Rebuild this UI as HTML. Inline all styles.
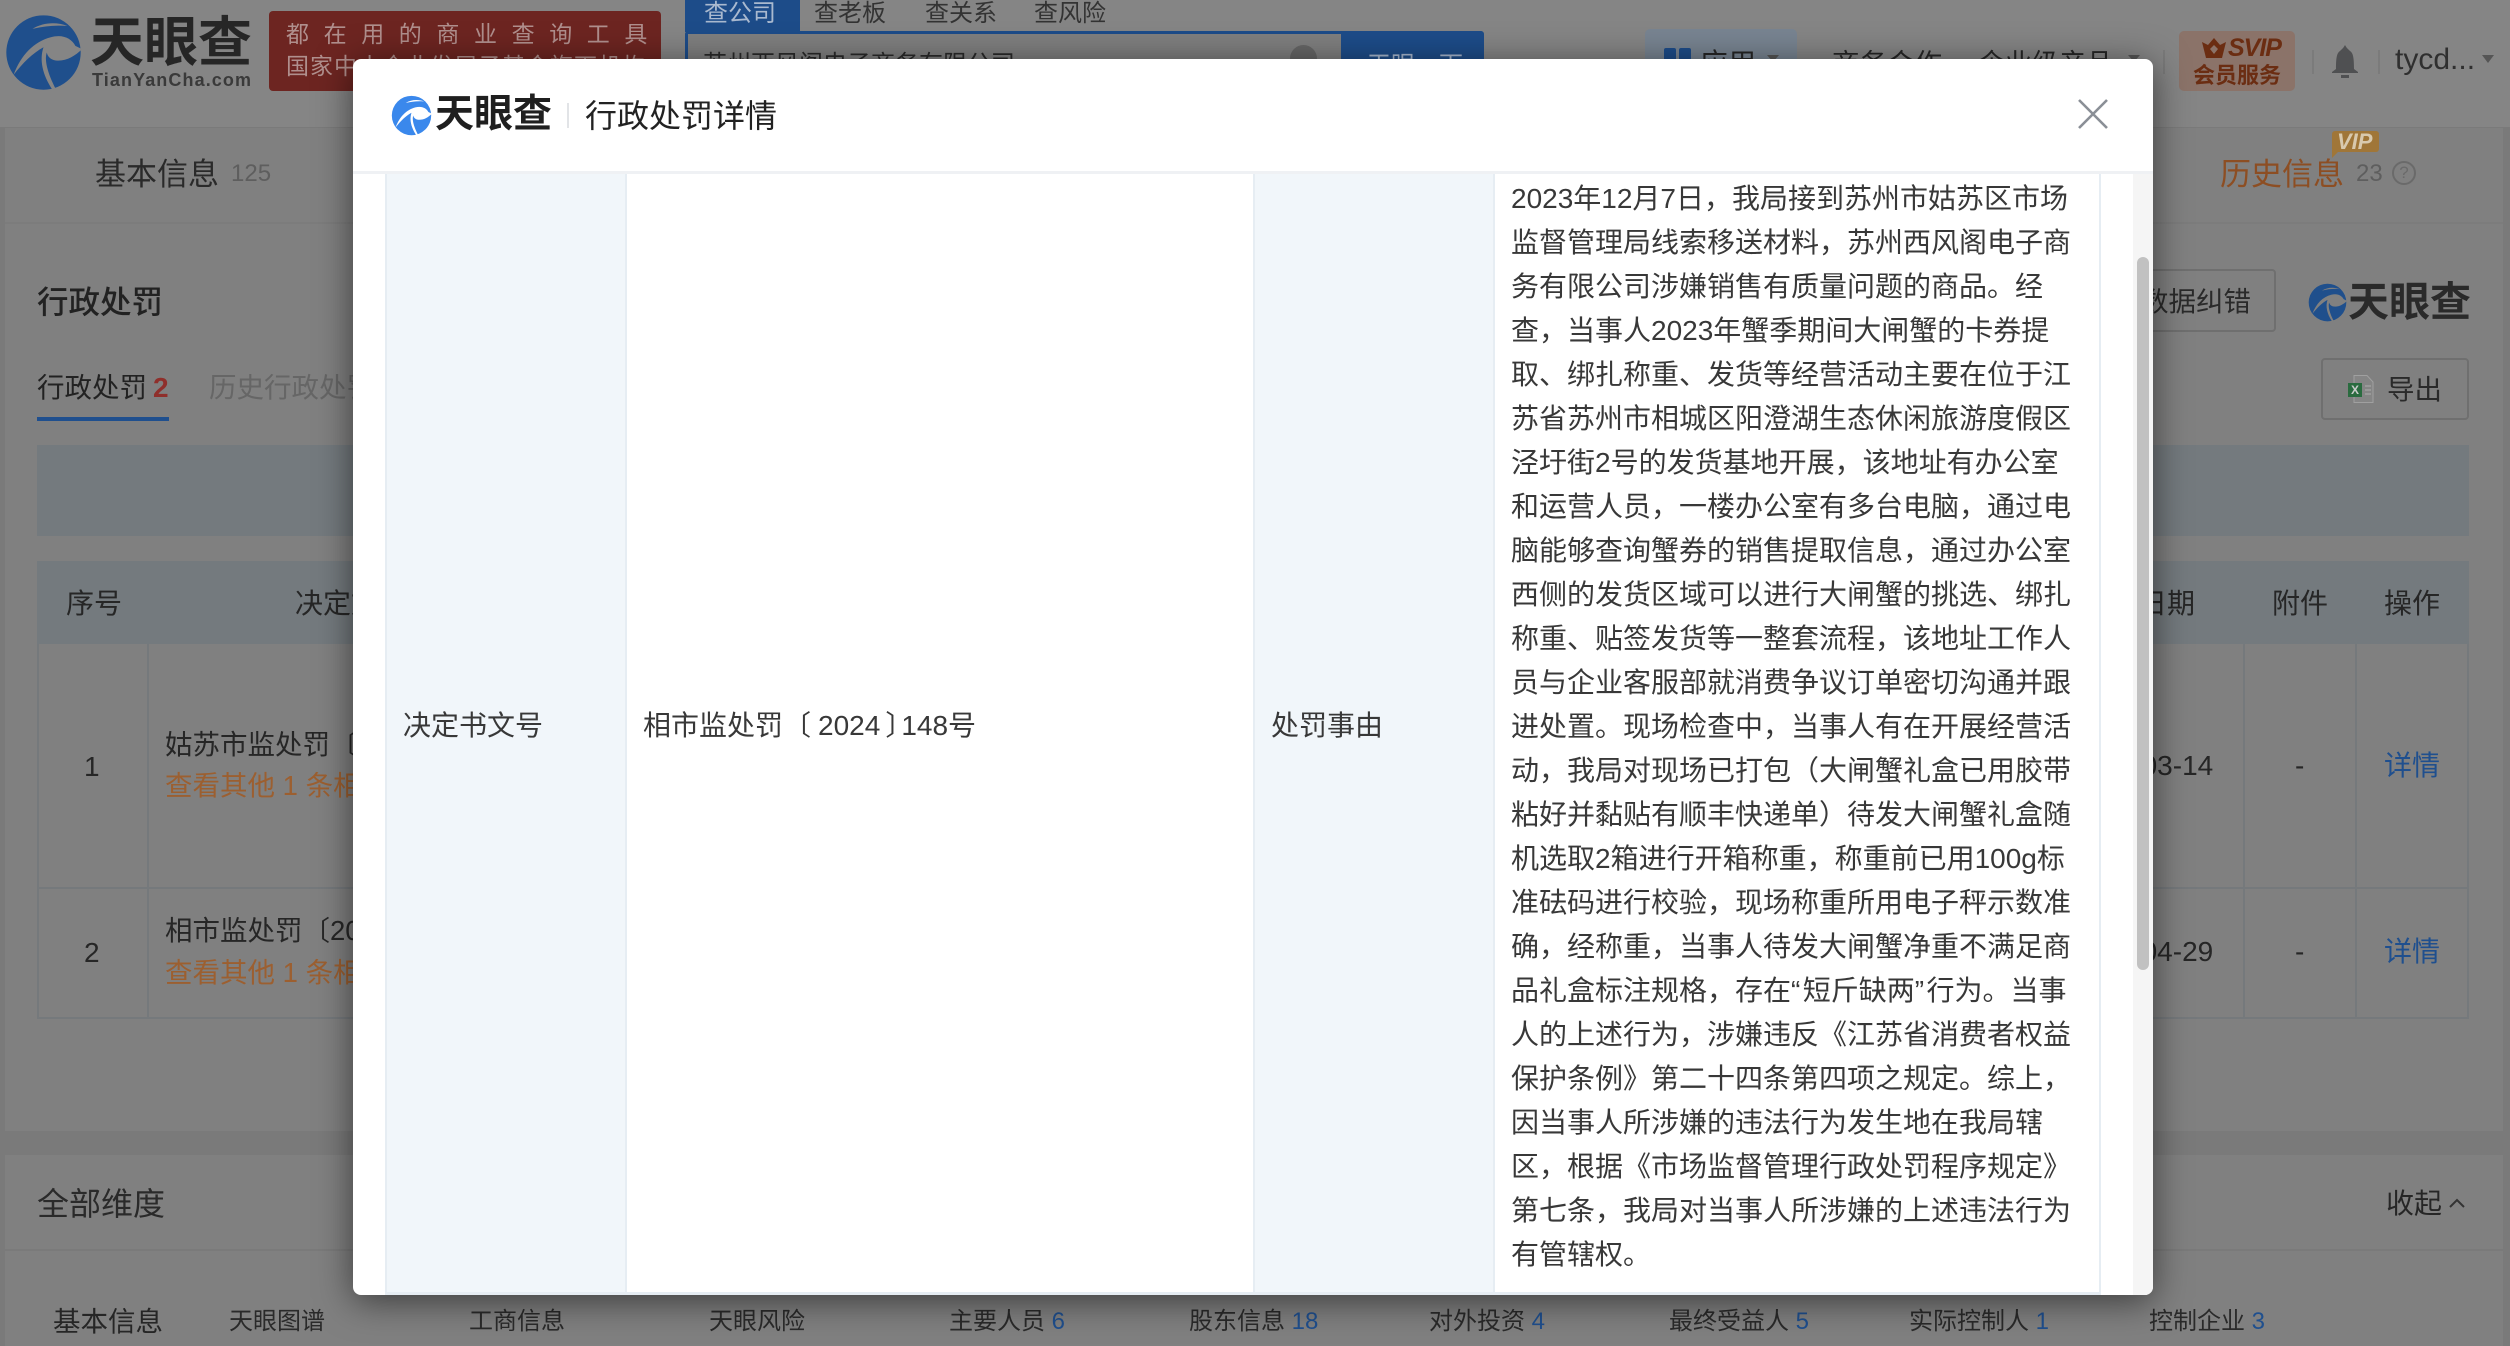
<!DOCTYPE html>
<html lang="zh-CN"><head><meta charset="utf-8"><title>行政处罚详情</title>
<style>
*{box-sizing:border-box}
html,body{margin:0;padding:0;width:2510px;height:1346px;overflow:hidden;background:#7a7a7a;font-family:"Liberation Sans","Noto Sans CJK SC",sans-serif}
.a{position:absolute}
.t{position:absolute;white-space:nowrap;line-height:40px;height:40px;font-size:28px;color:#262626}
.b{color:#1f4f8e}
.s{font-size:24px;color:#2a2a2a}
.l{position:absolute;left:1511px;height:44px;line-height:44px;font-size:28px;color:#383838;white-space:nowrap;margin-top:1px}
</style></head><body>
<svg width="0" height="0" style="position:absolute"><defs>
<symbol id="lg" viewBox="0 0 256 256"><circle cx="128" cy="128" r="112" fill="var(--c)"/>
<path fill="currentColor" d="M95 57C125 38 165 35 200 48C165 45 130 48 95 57Z"/>
<path fill="currentColor" d="M38 195C60 135 100 95 150 82C185 72 212 85 224 108L244 118C222 140 195 155 165 152C150 150 140 140 138 128C130 150 140 190 165 238L155 240C125 195 115 150 128 112C95 130 65 160 38 195Z"/>
</symbol></defs></svg>

<!-- header -->
<div class="a" style="left:0;top:0;width:2510px;height:127px;background:#858585"></div>
<svg class="a" style="left:1px;top:10px;width:85px;height:85px;--c:#1f4f8c;color:#858585"><use href="#lg"/></svg>
<div class="t" style="left:90px;top:12px;font-size:54px;height:62px;line-height:62px;font-weight:700;color:#262626;letter-spacing:0">天眼查</div>
<div class="t" style="left:92px;top:60px;font-size:18px;font-weight:700;color:#3a3a3a;letter-spacing:1.1px">TianYanCha.com</div>
<div class="a" style="left:269px;top:11px;width:392px;height:80px;background:#6d2521;border-radius:4px"></div>
<div class="t" style="left:286px;top:14px;font-size:23px;color:#b08f8d;letter-spacing:14.6px">都在用的商业查询工具</div>
<div class="t" style="left:286px;top:46px;font-size:23px;color:#b08f8d;letter-spacing:1px">国家中小企业发展子基金旗下机构</div>
<div class="a" style="left:685px;top:0;width:115px;height:32px;background:#1d4c89"></div>
<div class="t" style="left:704px;top:-6px;font-size:24px;color:#a9b9cf">查公司</div>
<div class="t" style="left:814px;top:-6px;font-size:24px;color:#333">查老板</div>
<div class="t" style="left:925px;top:-6px;font-size:24px;color:#333">查关系</div>
<div class="t" style="left:1034px;top:-6px;font-size:24px;color:#333">查风险</div>
<div class="a" style="left:685px;top:31px;width:799px;height:60px;border:3px solid #1d4c89;border-radius:3px;background:#7f7f7f"></div>
<div class="t" style="left:703px;top:45px;font-size:24px;color:#2a2a2a">苏州西风阁电子商务有限公司</div>
<div class="a" style="left:1290px;top:45px;width:27px;height:27px;border-radius:50%;background:#666"></div>
<div class="a" style="left:1341px;top:31px;width:143px;height:60px;background:#1d4c89;border-radius:0 4px 4px 0"></div>
<div class="t" style="left:1367px;top:46px;font-size:24px;color:#a9b9cf">天眼一下</div>
<div class="a" style="left:1645px;top:29px;width:152px;height:50px;background:#788491;border-radius:5px 5px 0 0"></div>
<div class="a" style="left:1664px;top:48px;width:12px;height:20px;background:#1d4c89;border-radius:2px"></div>
<div class="a" style="left:1679px;top:48px;width:12px;height:20px;background:#1d4c89;border-radius:2px"></div>
<div class="t" style="left:1700px;top:44px;font-size:28px">应用</div>
<div class="a" style="left:1767px;top:55px;width:0;height:0;border:6px solid transparent;border-top:7px solid #555"></div>
<div class="t" style="left:1832px;top:44px;font-size:27.500px">商务合作</div>
<div class="t" style="left:1978px;top:44px;font-size:27px">企业级产品</div>
<div class="a" style="left:2128px;top:55px;width:0;height:0;border:6px solid transparent;border-top:7px solid #555"></div>
<div class="a" style="left:2163px;top:50px;width:2px;height:24px;background:#7b7b7b"></div>
<div class="a" style="left:2179px;top:31px;width:116px;height:60px;background:#8b7369;border-radius:5px"></div>
<svg class="a" style="left:2202px;top:38px" width="24" height="20" viewBox="0 0 24 20"><path fill="#6b2d12" d="M0 4L6 7L12 0L18 7L24 4L20 20H4Z"/><path fill="#8b7369" d="M12 7L16 11L12 16L8 11Z"/></svg>
<div class="t" style="left:2228px;top:28px;font-size:25px;font-weight:700;font-style:italic;color:#6b2d12;letter-spacing:-1px">SVIP</div>
<div class="t" style="left:2193px;top:56px;font-size:22px;font-weight:700;color:#6b2d12">会员服务</div>
<div class="a" style="left:2312px;top:50px;width:2px;height:24px;background:#7b7b7b"></div>
<svg class="a" style="left:2331px;top:45px" width="28" height="33" viewBox="0 0 28 33"><path fill="#4f5052" d="M14 0C15.500 3 17 4 19 6C22 8 23 12 23 24L27 27V28H1V27L5 24C5 12 6 8 9 6C11 4 12.500 3 14 0Z"/><rect x="10" y="30" width="8" height="3" fill="#4f5052"/></svg>
<div class="a" style="left:2378px;top:50px;width:2px;height:24px;background:#7b7b7b"></div>
<div class="t" style="left:2395px;top:40px;font-size:30px;color:#2f2f2f">tycd...</div>
<div class="a" style="left:2482px;top:55px;width:0;height:0;border:6.500px solid transparent;border-top:8px solid #555"></div>

<!-- content cards -->
<div class="a" style="left:5px;top:128px;width:2498px;height:1003px;background:#808080"></div>
<div class="a" style="left:5px;top:222px;width:2498px;height:2px;background:#7c7c7c"></div>
<div class="t" style="left:95px;top:155px;font-size:31px;color:#2a2a2a">基本信息</div>
<div class="t" style="left:231px;top:154px;font-size:24px;color:#5e5e5e">125</div>
<div class="a" style="left:2332px;top:131px;width:47px;height:21px;background:#a07638;border-radius:3px"></div>
<div class="a" style="left:2332px;top:150px;width:0;height:0;border-left:8px solid #a07638;border-bottom:8px solid transparent"></div>
<div class="t" style="left:2337px;top:122px;font-size:22px;font-weight:700;font-style:italic;color:#d8c9ae">VIP</div>
<div class="t" style="left:2220px;top:155px;font-size:31px;color:#8d4e23">历史信息</div>
<div class="t" style="left:2356px;top:154px;font-size:24px;color:#5e5e5e">23</div>
<div class="a" style="left:2392px;top:161px;width:24px;height:24px;border:2px solid #6a6a6a;border-radius:50%;color:#6a6a6a;font-size:17px;line-height:20px;text-align:center">?</div>

<div class="t" style="left:37px;top:282px;font-size:31.500px;font-weight:500;color:#222">行政处罚</div>
<div class="t" style="left:37px;top:368px;font-size:27.500px;color:#222">行政处罚</div>
<div class="t" style="left:153px;top:368px;font-size:28px;font-weight:700;color:#8f2f2b">2</div>
<div class="a" style="left:37px;top:417px;width:132px;height:4px;background:#1f4f8e"></div>
<div class="t" style="left:209px;top:368px;font-size:27.500px;color:#666">历史行政处罚</div>
<div class="a" style="left:2100px;top:269px;width:176px;height:63px;border:2px solid #6f6f6f;border-radius:4px"></div>
<div class="t" style="left:2141px;top:282px;font-size:27.500px;color:#2a2a2a">数据纠错</div>
<svg class="a" style="left:2306px;top:281px;width:43px;height:43px;--c:#1f4f8c;color:#808080"><use href="#lg"/></svg>
<div class="t" style="left:2348px;top:280px;font-size:41px;height:44px;line-height:44px;font-weight:700;color:#2a2a2a">天眼查</div>
<div class="a" style="left:2321px;top:358px;width:148px;height:62px;border:2px solid #6f6f6f;border-radius:4px"></div>
<svg class="a" style="left:2348px;top:375px" width="26" height="28" viewBox="0 0 26 28"><path fill="#858585" stroke="#a0a0a0" d="M6 .5H19L25 7V27.500H6Z"/><path stroke="#a0a0a0" stroke-width="1.500" d="M17 11H23M17 15H23M17 19H23"/><rect y="8" width="14" height="14" fill="#2a6b3f"/><text x="7" y="19" text-anchor="middle" font-size="12" font-weight="700" fill="#ccc" font-family="Liberation Sans">X</text></svg>
<div class="t" style="left:2387px;top:370px;font-size:27.500px;color:#2a2a2a">导出</div>

<div class="a" style="left:37px;top:445px;width:2432px;height:91px;background:#747a7e"></div>
<div class="a" style="left:37px;top:561px;width:2432px;height:83px;background:#747a7e"></div>
<!-- table grid -->
<div class="a" style="left:37px;top:644px;width:2px;height:374px;background:#75797c"></div>
<div class="a" style="left:147px;top:644px;width:2px;height:374px;background:#75797c"></div>
<div class="a" style="left:2243px;top:644px;width:2px;height:374px;background:#75797c"></div>
<div class="a" style="left:2355px;top:644px;width:2px;height:374px;background:#75797c"></div>
<div class="a" style="left:2467px;top:644px;width:2px;height:374px;background:#75797c"></div>
<div class="a" style="left:37px;top:887px;width:2432px;height:2px;background:#75797c"></div>
<div class="a" style="left:37px;top:1017px;width:2432px;height:2px;background:#75797c"></div>
<div class="t" style="left:66px;top:584px">序号</div>
<div class="t" style="left:295px;top:584px">决定文书号</div>
<div class="t" style="left:2139px;top:584px">日期</div>
<div class="t" style="left:2272px;top:584px">附件</div>
<div class="t" style="left:2384px;top:584px">操作</div>
<div class="t" style="left:84px;top:747px">1</div>
<div class="t" style="left:84px;top:933px">2</div>
<div class="t" style="left:165px;top:725px;font-size:27.500px">姑苏市监处罚〔2024〕</div>
<div class="t" style="left:165px;top:766px;font-size:27.500px;color:#9c5f30">查看其他 1 条相关</div>
<div class="t" style="left:165px;top:911px;font-size:27.500px">相市监处罚〔2024〕</div>
<div class="t" style="left:165px;top:953px;font-size:27.500px;color:#9c5f30">查看其他 1 条相关</div>
<div class="t" style="left:2070px;top:746px">2024-03-14</div>
<div class="t" style="left:2070px;top:932px">2024-04-29</div>
<div class="t" style="left:2295px;top:746px">-</div>
<div class="t" style="left:2295px;top:932px">-</div>
<div class="t b" style="left:2384px;top:746px">详情</div>
<div class="t b" style="left:2384px;top:932px">详情</div>

<div class="a" style="left:5px;top:1155px;width:2498px;height:191px;background:#808080"></div>
<div class="a" style="left:5px;top:1249px;width:2498px;height:2px;background:#7a7a7a"></div>
<div class="t" style="left:37px;top:1184px;font-size:32px;color:#2a2a2a">全部维度</div>
<div class="t" style="left:2386px;top:1184px">收起</div>
<svg class="a" style="left:2448px;top:1197px" width="18" height="12" viewBox="0 0 18 12"><path fill="none" stroke="#333" stroke-width="2" d="M2 10L9 3L16 10"/></svg>
<div class="t" style="left:53px;top:1302px;font-size:27.500px">基本信息</div>
<div class="t s" style="left:229px;top:1302px">天眼图谱</div>
<div class="t s" style="left:469px;top:1302px">工商信息</div>
<div class="t s" style="left:709px;top:1302px">天眼风险</div>
<div class="t s" style="left:949px;top:1302px">主要人员 <span class="b">6</span></div>
<div class="t s" style="left:1189px;top:1302px">股东信息 <span class="b">18</span></div>
<div class="t s" style="left:1429px;top:1302px">对外投资 <span class="b">4</span></div>
<div class="t s" style="left:1669px;top:1302px">最终受益人 <span class="b">5</span></div>
<div class="t s" style="left:1909px;top:1302px">实际控制人 <span class="b">1</span></div>
<div class="t s" style="left:2149px;top:1302px">控制企业 <span class="b">3</span></div>

<!-- modal -->
<div class="a" style="left:353px;top:59px;width:1800px;height:1236px;background:#fff;border-radius:8px;box-shadow:0 6px 36px rgba(0,0,0,.55);overflow:hidden">
<div class="a" style="left:-353px;top:-59px;width:2510px;height:1346px">
<svg class="a" style="left:389px;top:93px;width:45px;height:45px;--c:#3a88ec;color:#fff"><use href="#lg"/></svg>
<div class="t" style="left:435px;top:92px;font-size:39px;height:46px;line-height:46px;font-weight:700;color:#1f1f1f">天眼查</div>
<div class="a" style="left:567px;top:103px;width:2px;height:25px;background:#e2e4e7"></div>
<div class="t" style="left:585px;top:96px;font-size:32px;color:#222">行政处罚详情</div>
<svg class="a" style="left:2077px;top:98px" width="32" height="32" viewBox="0 0 32 32"><path fill="none" stroke="#8a8f96" stroke-width="2.600" d="M2 2L30 30M30 2L2 30"/></svg>
<div class="a" style="left:353px;top:171px;width:1800px;height:3px;background:#eff1f4"></div>
<div class="a" style="left:385px;top:174px;width:242px;height:1118px;background:#f1f6fa;border-left:2px solid #e6edf3;border-right:2px solid #e6edf3"></div>
<div class="a" style="left:1253px;top:174px;width:242px;height:1118px;background:#f1f6fa;border-left:2px solid #e6edf3;border-right:2px solid #e6edf3"></div>
<div class="a" style="left:2099px;top:174px;width:2px;height:1118px;background:#e6edf3"></div>
<div class="a" style="left:385px;top:1292px;width:1716px;height:3px;background:#e6edf3"></div>
<div class="a" style="left:2133px;top:174px;width:20px;height:1121px;background:#f5f5f5"></div>
<div class="a" style="left:2137px;top:257px;width:12px;height:713px;background:#c1c1c1;border-radius:6px"></div>
<div class="t" style="left:403px;top:706px;color:#383838">决定书文号</div>
<div class="t" style="left:643px;top:706px;color:#383838">相市监处罚〔<span style="position:relative;left:7px">2024</span><span style="position:relative;left:12px">〕</span>148号</div>
<div class="t" style="left:1271px;top:706px;color:#383838">处罚事由</div>
<div class="l" style="top:176px">2023年12月7日，我局接到苏州市姑苏区市场</div>
<div class="l" style="top:220px">监督管理局线索移送材料，苏州西风阁电子商</div>
<div class="l" style="top:264px">务有限公司涉嫌销售有质量问题的商品。经</div>
<div class="l" style="top:308px">查，当事人2023年蟹季期间大闸蟹的卡券提</div>
<div class="l" style="top:352px">取、绑扎称重、发货等经营活动主要在位于江</div>
<div class="l" style="top:396px">苏省苏州市相城区阳澄湖生态休闲旅游度假区</div>
<div class="l" style="top:440px">泾圩街2号的发货基地开展，该地址有办公室</div>
<div class="l" style="top:484px">和运营人员，一楼办公室有多台电脑，通过电</div>
<div class="l" style="top:528px">脑能够查询蟹券的销售提取信息，通过办公室</div>
<div class="l" style="top:572px">西侧的发货区域可以进行大闸蟹的挑选、绑扎</div>
<div class="l" style="top:616px">称重、贴签发货等一整套流程，该地址工作人</div>
<div class="l" style="top:660px">员与企业客服部就消费争议订单密切沟通并跟</div>
<div class="l" style="top:704px">进处置。现场检查中，当事人有在开展经营活</div>
<div class="l" style="top:748px">动，我局对现场已打包（大闸蟹礼盒已用胶带</div>
<div class="l" style="top:792px">粘好并黏贴有顺丰快递单）待发大闸蟹礼盒随</div>
<div class="l" style="top:836px">机选取2箱进行开箱称重，称重前已用100g标</div>
<div class="l" style="top:880px">准砝码进行校验，现场称重所用电子秤示数准</div>
<div class="l" style="top:924px">确，经称重，当事人待发大闸蟹净重不满足商</div>
<div class="l" style="top:968px">品礼盒标注规格，存在<span style="letter-spacing:2.400px">“</span>短斤缺两<span style="letter-spacing:2.400px">”</span>行为。当事</div>
<div class="l" style="top:1012px">人的上述行为，涉嫌违反《江苏省消费者权益</div>
<div class="l" style="top:1056px">保护条例》第二十四条第四项之规定。综上，</div>
<div class="l" style="top:1100px">因当事人所涉嫌的违法行为发生地在我局辖</div>
<div class="l" style="top:1144px">区，根据《市场监督管理行政处罚程序规定》</div>
<div class="l" style="top:1188px">第七条，我局对当事人所涉嫌的上述违法行为</div>
<div class="l" style="top:1232px">有管辖权。</div>
</div></div>
</body></html>
